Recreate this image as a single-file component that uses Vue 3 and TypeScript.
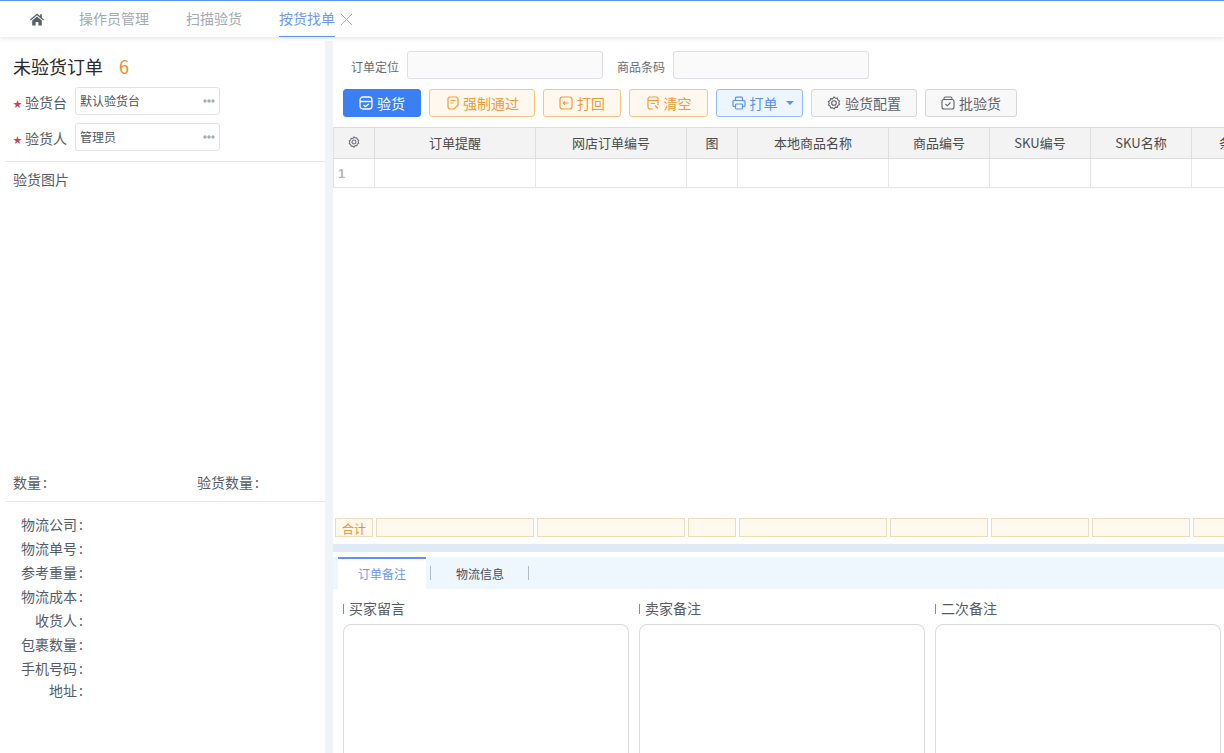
<script setup lang="ts">
const columns = [
  { title: '订单提醒', width: 161 },
  { title: '网店订单编号', width: 151 },
  { title: '图', width: 51 },
  { title: '本地商品名称', width: 151 },
  { title: '商品编号', width: 101 },
  { title: 'SKU编号', width: 101 },
  { title: 'SKU名称', width: 101 },
  { title: '条码编号', width: 107 },
]

const logistics = ['物流公司', '物流单号', '参考重量', '物流成本', '收货人', '包裹数量', '手机号码']
const notes = ['买家留言', '卖家备注', '二次备注']
</script>

<template>
  <div class="page">
    <header class="nav">
      <span class="home">
        <svg width="14" height="13" viewBox="0 0 14 13"><path d="M7 .6 0 6.6l.8.9L7 2.300l6.200 5.200.8-.9-2.200-1.900V1.200h-1.700v1.900zM2.200 7.600v5h3.400V8.900h2.800v3.700h3.400v-5L7 3.500z" fill="#595f69" /></svg>
      </span>
      <span class="nav-tab">操作员管理</span>
      <span class="nav-tab">扫描验货</span>
      <span class="nav-tab active">按货找单</span>
      <svg class="close" width="13" height="13" viewBox="0 0 13 13"><path d="M1 1l11 11M12 1 1 12" stroke="#a9afb8" stroke-width="1" fill="none" /></svg>
    </header>

    <div class="body">
      <aside class="left">
        <h2 class="title">未验货订单<span class="count">6</span></h2>
        <div class="field">
          <label><i>★</i>验货台</label>
          <div class="picker">默认验货台
            <svg class="dots" width="12" height="4" viewBox="0 0 12 4"><circle cx="2" cy="2" r="1.700" /><circle cx="6" cy="2" r="1.700" /><circle cx="10" cy="2" r="1.700" /></svg>
          </div>
        </div>
        <div class="field">
          <label><i>★</i>验货人</label>
          <div class="picker">管理员
            <svg class="dots" width="12" height="4" viewBox="0 0 12 4"><circle cx="2" cy="2" r="1.700" /><circle cx="6" cy="2" r="1.700" /><circle cx="10" cy="2" r="1.700" /></svg>
          </div>
        </div>
        <div class="photo">验货图片</div>
        <div class="qty">
          <span>数量<b class="colon">:</b></span>
          <span>验货数量<b class="colon">:</b></span>
        </div>
        <div class="info">
          <div v-for="item in logistics" :key="item" class="info-row">{{ item }}<b class="colon">:</b></div>
          <div class="info-row addr">地址<b class="colon">:</b></div>
        </div>
      </aside>

      <main class="right">
        <div class="search">
          <label>订单定位</label>
          <div class="search-input"></div>
          <label class="second">商品条码</label>
          <div class="search-input"></div>
        </div>

        <div class="toolbar">
          <button class="btn primary" type="button">
            <svg width="14" height="14" viewBox="0 0 14 14" fill="none" stroke="currentColor" stroke-width="1.3"><rect x="1" y="1" width="12" height="12" rx="3" /><path d="M1 5.500h12M4.500 9l1.800 1.600L9.800 8" /></svg>
            验货
          </button>
          <button class="btn warn force" type="button">
            <svg width="12" height="14" viewBox="0 0 12 14" fill="none" stroke="currentColor" stroke-width="1.2"><path d="M5 13H3a2 2 0 0 1-2-2V3a2 2 0 0 1 2-2h6a2 2 0 0 1 2 2v6l-4 4zM3.500 4.500h5M3.500 7h3" /></svg>
            强制通过
          </button>
          <button class="btn warn back" type="button">
            <svg width="14" height="14" viewBox="0 0 14 14" fill="none" stroke="currentColor" stroke-width="1.2"><rect x="1" y="1" width="12" height="12" rx="2.500" /><path d="M9.500 7h-5M6 5.200 4.300 7 6 8.800" /></svg>
            打回
          </button>
          <button class="btn warn clear" type="button">
            <svg width="14" height="14" viewBox="0 0 14 14" fill="none" stroke="currentColor" stroke-width="1.2"><path d="M7 13H4a2 2 0 0 1-2-2V3a2 2 0 0 1 2-2h6a2 2 0 0 1 2 2v6M2 4.500h10M5 7.500h4M9 9.500l3 3" /></svg>
            清空
          </button>
          <button class="btn info-btn" type="button">
            <svg width="14" height="14" viewBox="0 0 14 14" fill="none" stroke="currentColor" stroke-width="1.2"><path d="M3.500 4.500V2.200a1 1 0 0 1 1-1h5a1 1 0 0 1 1 1v2.300M3.500 10.500H2a1 1 0 0 1-1-1V5.500a1 1 0 0 1 1-1h10a1 1 0 0 1 1 1v4a1 1 0 0 1-1 1h-1.500" /><rect x="3.500" y="8" width="7" height="5" rx="1" /></svg>
            打单
            <span class="caret"></span>
          </button>
          <button class="btn plain config" type="button">
            <svg width="14" height="14" viewBox="0 0 14 14" fill="none" stroke="currentColor" stroke-width="1.1"><path d="M7 1l1.400 1.300 1.900-.2.500 1.800 1.700 1-.7 1.800.7 1.800-1.700 1-.5 1.800-1.900-.2L7 13l-1.400-1.300-1.900.2-.5-1.800-1.700-1 .7-1.800-.7-1.800 1.700-1 .5-1.800 1.900.2z" /><circle cx="7" cy="7" r="2.300" /></svg>
            验货配置
          </button>
          <button class="btn plain batch" type="button">
            <svg width="14" height="14" viewBox="0 0 14 14" fill="none" stroke="currentColor" stroke-width="1.1"><rect x="1" y="3.500" width="12" height="9.500" rx="2" /><path d="M3 3.500V2.500a1.500 1.500 0 0 1 1.500-1.500h5A1.500 1.500 0 0 1 11 2.500v1M4.500 8l1.800 1.800L9.500 6.500" /></svg>
            批验货
          </button>
        </div>

        <div class="grid">
          <div class="grid-row head">
            <div class="cell index">
              <svg width="12" height="12" viewBox="0 0 14 14" fill="none" stroke="#6b7078" stroke-width="1.2"><path d="M7 1l1.400 1.300 1.900-.2.500 1.800 1.700 1-.7 1.800.7 1.800-1.700 1-.5 1.800-1.900-.2L7 13l-1.400-1.300-1.900.2-.5-1.800-1.700-1 .7-1.800-.7-1.800 1.700-1 .5-1.800 1.900.2z" /><circle cx="7" cy="7" r="2.300" /></svg>
            </div>
            <div v-for="col in columns" :key="col.title" class="cell" :style="{ width: col.width + 'px' }">{{ col.title }}</div>
          </div>
          <div class="grid-row line">
            <div class="cell index num">1</div>
            <div v-for="col in columns" :key="col.title" class="cell" :style="{ width: col.width + 'px' }"></div>
          </div>
          <div class="grid-space"></div>
          <div class="sum">
            <div class="sum-cell first">合计</div>
            <div v-for="col in columns" :key="col.title" class="sum-cell" :style="{ width: col.width - 3 + 'px' }"></div>
          </div>
        </div>

        <div class="split"></div>

        <div class="tabs">
          <span class="tab current">订单备注</span>
          <span class="tab-sep first-sep"></span>
          <span class="tab">物流信息</span>
          <span class="tab-sep"></span>
        </div>

        <div class="notes">
          <section v-for="note in notes" :key="note" class="note">
            <h3>{{ note }}</h3>
            <div class="note-box"></div>
          </section>
        </div>
      </main>
    </div>
  </div>
</template>

<style>
html,
body {
  margin: 0;
  overflow: hidden;
}
</style>

<style scoped>
.page {
  width: 1224px;
  height: 753px;
  overflow: hidden;
  display: flex;
  flex-direction: column;
  background: #fff;
  font-family: "Noto Sans CJK SC", "Noto Sans", sans-serif;
  color: #555b65;
}

.nav {
  flex: none;
  height: 36px;
  border-top: 1px solid #5b94f8;
  display: flex;
  align-items: center;
  padding-left: 30px;
  box-shadow: 0 1px 5px rgba(0, 0, 0, 0.12);
  position: relative;
  font-size: 14px;
}

.home {
  display: flex;
  margin-right: 35px;
}

.nav-tab {
  color: #a2a8b4;
  margin-right: 37px;
  height: 36px;
  line-height: 35px;
  box-sizing: border-box;
}

.nav-tab.active {
  color: #6d97f0;
  margin-right: 5px;
  border-bottom: 1px solid #5b94f8;
}

.body {
  flex: 1;
  display: flex;
  min-height: 0;
  padding-top: 4px;
}

.left {
  width: 325px;
  flex: none;
  box-sizing: border-box;
  padding-left: 5px;
  display: flex;
  flex-direction: column;
}

.title {
  margin: 12px 0 0 8px;
  height: 26px;
  line-height: 26px;
  font-size: 18px;
  font-weight: 400;
  color: #2a2a2a;
}

.count {
  color: #f08a2c;
  margin-left: 16px;
}

.field {
  display: flex;
  align-items: center;
  height: 28px;
  margin-top: 8px;
  margin-left: 8px;
  font-size: 14px;
}

.field label {
  width: 62px;
  padding-top: 2px;
  color: #555b65;
  white-space: nowrap;
}

.field i {
  display: inline-block;
  width: 12px;
  font-style: normal;
  font-size: 9px;
  color: #d4405a;
  vertical-align: 1px;
}

.picker {
  width: 145px;
  height: 28px;
  box-sizing: border-box;
  border: 1px solid #dfe3e8;
  border-radius: 3px;
  padding-left: 4px;
  font-size: 12px;
  line-height: 26px;
  color: #50545c;
  position: relative;
}

.dots {
  position: absolute;
  right: 4px;
  top: 11px;
  fill: #a3aeb8;
}

.photo {
  margin-top: 10px;
  border-top: 1px solid #e6e8eb;
  padding: 7px 0 0 8px;
  height: 303px;
  font-size: 14px;
  line-height: 20px;
}

.qty {
  display: flex;
  height: 29px;
  padding-left: 8px;
  font-size: 14px;
  line-height: 20px;
  border-bottom: 1px solid #e6e8eb;
}

.qty span:first-child {
  width: 184px;
}

.colon {
  font-weight: 400;
  padding-left: 2px;
}

.info {
  padding-top: 10px;
}

.info-row {
  width: 78px;
  height: 24px;
  line-height: 24px;
  font-size: 14px;
  text-align: right;
  white-space: nowrap;
}

.info-row.addr {
  height: 20px;
  line-height: 20px;
}

.right {
  flex: 1;
  min-width: 0;
  display: flex;
  flex-direction: column;
  border-left: 8px solid #f0f3f7;
  overflow: hidden;
}

.search {
  flex: none;
  display: flex;
  align-items: center;
  height: 28px;
  margin-top: 10px;
  padding-left: 18px;
  font-size: 12px;
  color: #666c76;
}

.search label {
  margin-right: 8px;
  padding-top: 2px;
  white-space: nowrap;
}

.search .second {
  margin-left: 14px;
}

.search-input {
  width: 196px;
  height: 28px;
  box-sizing: border-box;
  border: 1px solid #dcdfe3;
  border-radius: 3px;
  background: #fafafa;
  flex: none;
}

.toolbar {
  flex: none;
  display: flex;
  margin-top: 10px;
  padding-left: 10px;
  height: 28px;
}

.btn {
  flex: none;
  height: 28px;
  box-sizing: border-box;
  border: 1px solid;
  border-radius: 3px;
  font: inherit;
  font-size: 14px;
  line-height: 26px;
  padding: 0;
  margin: 0 8px 0 0;
  display: flex;
  align-items: center;
  justify-content: center;
  gap: 4px;
}

.primary {
  width: 78px;
  background: #3b7ff5;
  border-color: #3b7ff5;
  color: #fff;
}

.warn {
  background: #fff8ef;
  border-color: #fbc57f;
  color: #f39a35;
}

.force {
  width: 106px;
  padding-left: 2px;
}

.back {
  width: 78px;
}

.clear {
  width: 79px;
}

.info-btn {
  width: 87px;
  padding-left: 6px;
  background: #edf5ff;
  border-color: #8dbcf9;
  color: #5c8ff0;
}

.caret {
  width: 0;
  height: 0;
  margin-left: 4px;
  border-left: 4px solid transparent;
  border-right: 4px solid transparent;
  border-top: 4px solid #5c8ff0;
}

.plain {
  background: #f8f8f8;
  border-color: #d4d6d9;
  color: #5f636b;
}

.config {
  width: 106px;
}

.batch {
  width: 92px;
}

.grid {
  flex: none;
  height: 417px;
  margin-top: 10px;
  display: flex;
  flex-direction: column;
}

.grid-row {
  display: flex;
  flex: none;
  width: 1100px;
}

.head {
  height: 32px;
  background: #f3f3f3;
  border-top: 1px solid #dcdcdc;
  border-bottom: 1px solid #dcdcdc;
  box-sizing: border-box;
  color: #4a4a4a;
  font-size: 13px;
}

.head .cell {
  padding-bottom: 2px;
}

.line {
  height: 29px;
  box-sizing: border-box;
  border-bottom: 1px solid #e4e4e4;
}

.cell {
  flex: none;
  box-sizing: border-box;
  border-right: 1px solid #dedede;
  display: flex;
  align-items: center;
  justify-content: center;
  white-space: nowrap;
}

.line .cell {
  border-right-color: #e6e6e6;
}

.index {
  width: 42px;
  border-left: 1px solid #e0e0e0;
}

.num {
  justify-content: flex-start;
  padding-left: 4px;
  font-family: "Liberation Sans", sans-serif;
  font-size: 13px;
  font-weight: 700;
  color: #b4b8bd;
}

.grid-space {
  flex: 1;
}

.sum {
  flex: none;
  display: flex;
  gap: 3px;
  height: 19px;
  padding-left: 2px;
  margin-bottom: 7px;
  width: 1100px;
}

.sum-cell {
  flex: none;
  box-sizing: border-box;
  border: 1px solid #eedcb8;
  background: #fff8ec;
  font-size: 12px;
  line-height: 19px;
  color: #f08a2c;
  text-align: center;
}

.sum-cell.first {
  width: 38px;
}

.split {
  flex: none;
  height: 8px;
  background: #e0eaf5;
}

.tabs {
  flex: none;
  display: flex;
  align-items: center;
  height: 32px;
  margin-top: 5px;
  padding-left: 5px;
  background: #eef6fe;
  font-size: 12px;
  color: #454f5c;
}

.tab {
  width: 96px;
  height: 32px;
  line-height: 34px;
  text-align: center;
  box-sizing: border-box;
}

.tab.current {
  width: 88px;
  background: #fff;
  border-top: 2px solid #5b94f8;
  line-height: 30px;
  color: #6d97f0;
}

.tab-sep {
  width: 1px;
  height: 14px;
  background: #aebccb;
}

.first-sep {
  margin: 0 1px 0 4px;
}

.notes {
  flex: none;
  display: flex;
  gap: 10px;
  padding: 11px 0 0 10px;
}

.note {
  width: 286px;
  flex: none;
}

.note h3 {
  margin: 0 0 7px;
  height: 17px;
  line-height: 17px;
  font-size: 14px;
  font-weight: 400;
  color: #555b65;
  padding-left: 6px;
  position: relative;
}

.note h3::before {
  content: "";
  position: absolute;
  left: 0;
  top: 4px;
  width: 1px;
  height: 10px;
  background: #4b9bf5;
}

.note-box {
  height: 200px;
  box-sizing: border-box;
  border: 1px solid #d9d9d9;
  border-radius: 8px;
}
</style>
